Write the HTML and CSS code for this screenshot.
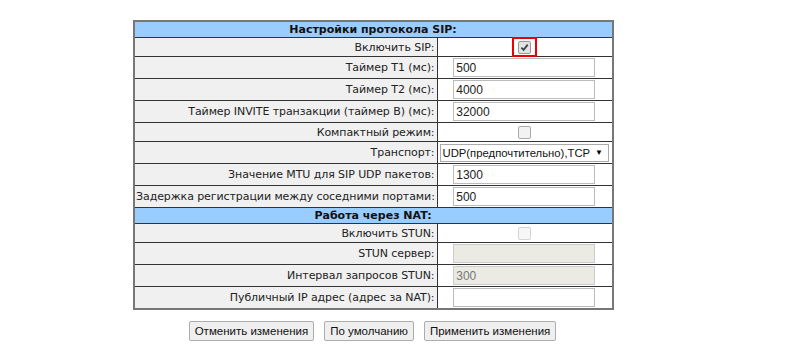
FILE: index.html
```html
<!DOCTYPE html>
<html lang="ru">
<head>
    <meta charset="UTF-8">
    <title>Настройки протокола SIP</title>
    <link rel="stylesheet" href="styles.css">
</head>
<body>
    <div class="page">
        <form class="settings">
            <table class="grid">
                <colgroup>
                    <col class="col-label">
                    <col class="col-value">
                </colgroup>
                <tr class="head"><td colspan="2">Настройки протокола SIP:</td></tr>
                <tr class="short">
                    <td class="label">Включить SIP:</td>
                    <td class="value">
                        <span class="mark-wrap">
                            <span class="check checked">
                                <svg viewBox="0 0 10 10" width="9" height="9"><path d="M1.5 5.2 L4 7.6 L8.6 1.8" fill="none" stroke="#444" stroke-width="2"/></svg>
                            </span>
                            <span class="highlight"></span>
                        </span>
                    </td>
                </tr>
                <tr>
                    <td class="label">Таймер T1 (мс):</td>
                    <td class="value"><input class="field" type="text" value="500"></td>
                </tr>
                <tr>
                    <td class="label">Таймер T2 (мс):</td>
                    <td class="value"><input class="field" type="text" value="4000"></td>
                </tr>
                <tr>
                    <td class="label">Таймер INVITE транзакции (таймер B) (мс):</td>
                    <td class="value"><input class="field" type="text" value="32000"></td>
                </tr>
                <tr class="short">
                    <td class="label">Компактный режим:</td>
                    <td class="value"><span class="check"></span></td>
                </tr>
                <tr>
                    <td class="label">Транспорт:</td>
                    <td class="value value-select">
                        <div class="select"><span>UDP(предпочтительно),TCP</span><span class="arrow">▼</span></div>
                    </td>
                </tr>
                <tr>
                    <td class="label">Значение MTU для SIP UDP пакетов:</td>
                    <td class="value"><input class="field" type="text" value="1300"></td>
                </tr>
                <tr>
                    <td class="label">Задержка регистрации между соседними портами:</td>
                    <td class="value"><input class="field" type="text" value="500"></td>
                </tr>
                <tr class="head"><td colspan="2">Работа через NAT:</td></tr>
                <tr class="short">
                    <td class="label">Включить STUN:</td>
                    <td class="value"><span class="check disabled"></span></td>
                </tr>
                <tr>
                    <td class="label">STUN сервер:</td>
                    <td class="value"><input class="field" type="text" value="" disabled></td>
                </tr>
                <tr>
                    <td class="label">Интервал запросов STUN:</td>
                    <td class="value"><input class="field" type="text" value="300" disabled></td>
                </tr>
                <tr>
                    <td class="label">Публичный IP адрес (адрес за NAT):</td>
                    <td class="value"><input class="field" type="text" value=""></td>
                </tr>
            </table>
            <div class="actions">
                <button type="button">Отменить изменения</button>
                <button type="button">По умолчанию</button>
                <button type="button">Применить изменения</button>
            </div>
        </form>
    </div>
</body>
</html>
```

FILE: styles.css
```css
body {
    margin: 0;
    background-color: #fff;
    font-family: "DejaVu Sans", Verdana, sans-serif;
    font-size: 11px;
    color: #222;
}

.page {
    padding: 20px 0 0 133px;
}

.settings {
    width: 479px;
}

.grid {
    width: 479px;
    table-layout: fixed;
    border-collapse: collapse;
    border: 2px solid #777;
}
.col-label {
    width: 303px;
}
.col-value {
    width: 176px;
}
.grid td {
    border: 1px solid #333;
    padding: 0 2px 0 1px;
    height: 21px;
    white-space: nowrap;
    letter-spacing: -0.08px;
}
.grid tr.short td {
    height: 18px;
}
.grid tr.head td {
    height: 15px;
    background-color: #99ccff;
    font-weight: bold;
    text-align: center;
    color: #111;
    letter-spacing: 0;
}
.label {
    background-color: #f0f0f0;
    text-align: right;
}
.value {
    background-color: #fff;
    text-align: center;
}
.value-select {
    padding: 0;
}

.field {
    box-sizing: border-box;
    width: 142px;
    height: 19px;
    margin: 0;
    padding: 0 2px;
    vertical-align: middle;
    border: 1px solid #bbb;
    background-color: #fff;
    font-family: "Liberation Sans", Tahoma, sans-serif;
    font-size: 12px;
    color: #222;
}
.field:disabled {
    background-color: #ebebe4;
    border-color: #ccc;
    color: #777;
}

.check {
    display: inline-flex;
    align-items: center;
    justify-content: center;
    box-sizing: border-box;
    width: 13px;
    height: 13px;
    vertical-align: middle;
    border: 1px solid #aaa;
    border-radius: 2px;
    background-color: #f2f2f2;
}
.check.checked {
    background-color: #e2e2e2;
    border-color: #999;
}
.check.disabled {
    border-color: #d4d4d4;
    background-color: #f6f6f6;
}

.mark-wrap {
    position: relative;
    display: inline-block;
    vertical-align: middle;
    line-height: 0;
}
.highlight {
    position: absolute;
    left: -6px;
    top: -4px;
    width: 25px;
    height: 20px;
    border: 2px solid #ee0000;
    box-sizing: border-box;
}

.select {
    display: flex;
    justify-content: space-between;
    align-items: center;
    box-sizing: border-box;
    height: 18px;
    margin: 0 1px 0 1px;
    padding: 0 5px 0 2px;
    border: 1px solid #aaa;
    background-color: #fff;
    font-family: "Liberation Sans", Tahoma, sans-serif;
    font-size: 11.3px;
    letter-spacing: 0;
    color: #111;
}
.arrow {
    font-size: 8px;
    color: #000;
}

.actions {
    display: flex;
    justify-content: center;
    gap: 10px;
    margin-top: 11px;
}
button {
    height: 20px;
    padding: 0 5px;
    border: 1px solid #adadad;
    border-radius: 2px;
    background-color: #efefef;
    font-family: "Liberation Sans", Tahoma, sans-serif;
    font-size: 11.5px;
    color: #111;
    cursor: pointer;
}
button:hover {
    background-color: #e5f1fb;
}
```
